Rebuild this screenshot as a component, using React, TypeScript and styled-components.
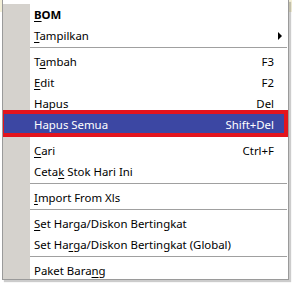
import styled, { createGlobalStyle } from "styled-components";

const GlobalStyle = createGlobalStyle`
  html, body {
    margin: 0;
    padding: 0;
    background: #ffffff;
  }
  body {
    font-family: "Noto Sans", "DejaVu Sans", sans-serif;
  }
`;

type Item =
  | { kind: "sep" }
  | {
      kind: "item";
      label: string;
      key?: number;
      shortcut?: string;
      bold?: boolean;
      submenu?: boolean;
      active?: boolean;
    };

const items: Item[] = [
  { kind: "item", label: "BOM", key: 0, bold: true },
  { kind: "item", label: "Tampilkan", key: 0, submenu: true },
  { kind: "sep" },
  { kind: "item", label: "Tambah", key: 1, shortcut: "F3" },
  { kind: "item", label: "Edit", key: 0, shortcut: "F2" },
  { kind: "item", label: "Hapus", key: 0, shortcut: "Del" },
  { kind: "item", label: "Hapus Semua", shortcut: "Shift+Del", active: true },
  { kind: "sep" },
  { kind: "item", label: "Cari", key: 0, shortcut: "Ctrl+F" },
  { kind: "item", label: "Cetak Stok Hari Ini", key: 4 },
  { kind: "sep" },
  { kind: "item", label: "Import From Xls", key: 0 },
  { kind: "sep" },
  { kind: "item", label: "Set Harga/Diskon Bertingkat", key: 0 },
  { kind: "item", label: "Set Harga/Diskon Bertingkat (Global)", key: 6 },
  { kind: "sep" },
  { kind: "item", label: "Paket Barang", key: 10 },
];

function Label({ text, at }: { text: string; at?: number }) {
  if (at === undefined) return <>{text}</>;
  return (
    <>
      {text.slice(0, at)}
      <u>{text[at]}</u>
      {text.slice(at + 1)}
    </>
  );
}

export default function App() {
  return (
    <Page>
      <GlobalStyle />
      <Menu>
        {items.map((it, i) =>
          it.kind === "sep" ? (
            <Separator key={i} />
          ) : (
            <Row key={i} active={it.active}>
              <Gutter active={it.active} />
              <Text bold={it.bold}>
                <Label text={it.label} at={it.key} />
              </Text>
              {it.shortcut && <Shortcut>{it.shortcut}</Shortcut>}
              {it.submenu && <Arrow />}
              {it.active && <Marker />}
            </Row>
          )
        )}
      </Menu>
    </Page>
  );
}

const Page = styled.div`
  width: 292px;
  height: 283px;
  overflow: hidden;
  position: relative;
  background: linear-gradient(to bottom, #f4f0d8 0, #f4f0d8 12px, #ffffff 12px);
`;

const Menu = styled.div`
  margin-left: 2px;
  width: 285px;
  height: 275px;
  overflow: hidden;
  padding-top: 4px;
  background: #ffffff;
  border: 1px solid #9a9a9a;
  border-top: none;
  box-shadow: 2px 2px 1px rgba(0, 0, 0, 0.2);
  display: flex;
  flex-direction: column;
`;

const Row = styled.div<{ active?: boolean }>`
  position: relative;
  flex: none;
  height: 21px;
  display: flex;
  align-items: center;
  font-size: 11.4px;
  color: ${(p) => (p.active ? "#ffffff" : "#000000")};
  background: ${(p) => (p.active ? "#3c47a3" : "transparent")};
`;

const Gutter = styled.div<{ active?: boolean }>`
  width: 27px;
  align-self: stretch;
  background: ${(p) => (p.active ? "transparent" : "#d5d2cd")};
  flex: none;
`;

const Text = styled.span<{ bold?: boolean }>`
  flex: 1;
  padding-left: 4px;
  font-weight: ${(p) => (p.bold ? 700 : 400)};
  white-space: nowrap;
  u {
    text-underline-offset: 2px;
  }
`;

const Shortcut = styled.span`
  padding-right: 14px;
  white-space: nowrap;
`;

const Arrow = styled.span`
  width: 0;
  height: 0;
  margin-right: 6px;
  border-top: 4px solid transparent;
  border-bottom: 4px solid transparent;
  border-left: 4px solid #000000;
`;

const Marker = styled.div`
  position: absolute;
  left: -3px;
  right: 0;
  top: -4px;
  bottom: -2px;
  border: 4px solid #e3141d;
  pointer-events: none;
  z-index: 1;
`;

const Separator = styled.div`
  height: 5px;
  flex: none;
  display: flex;
  &::before {
    content: "";
    width: 27px;
    background: #d5d2cd;
  }
  &::after {
    content: "";
    flex: 1;
    height: 1px;
    margin: 1px 1px 0 0;
    background: #a0a0a0;
  }
`;
